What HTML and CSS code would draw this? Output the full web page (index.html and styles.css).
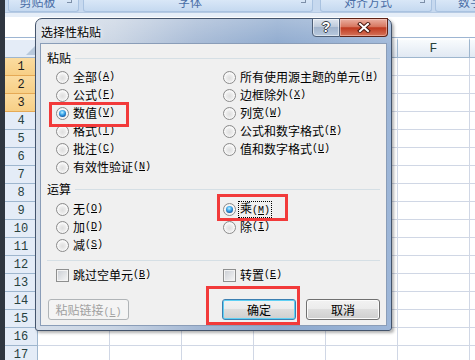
FILE: index.html
```html
<!DOCTYPE html>
<html lang="zh-CN">
<head>
    <meta charset="UTF-8">
    <meta name="viewport" content="width=device-width, initial-scale=1.0">
    <title>选择性粘贴</title>
    <link rel="stylesheet" href="styles.css">
</head>
<body>
<div class="app">
    <div class="ribbon">
        <div class="group g-clip"><span>剪贴板</span><i class="launch"></i></div>
        <div class="group g-font"><span>字体</span><i class="launch"></i></div>
        <div class="group g-align"><span>对齐方式</span><i class="launch"></i></div>
        <div class="group g-num"><span>数字</span></div>
    </div>
    <div class="formula-bar"></div>

    <div class="sheet">
        <div class="row head">
            <div class="corner"></div>
            <div class="col">A</div>
            <div class="col">B</div>
            <div class="col">C</div>
            <div class="col">D</div>
            <div class="col">E</div>
            <div class="col">F</div>
            <div class="col">G</div>
        </div>
        <div class="row sel"><div class="rh">1</div><div class="cells"></div></div>
        <div class="row sel"><div class="rh">2</div><div class="cells"></div></div>
        <div class="row sel"><div class="rh">3</div><div class="cells"></div></div>
        <div class="row"><div class="rh">4</div><div class="cells"></div></div>
        <div class="row"><div class="rh">5</div><div class="cells"></div></div>
        <div class="row"><div class="rh">6</div><div class="cells"></div></div>
        <div class="row"><div class="rh">7</div><div class="cells"></div></div>
        <div class="row"><div class="rh">8</div><div class="cells"></div></div>
        <div class="row"><div class="rh">9</div><div class="cells"></div></div>
        <div class="row"><div class="rh">10</div><div class="cells"></div></div>
        <div class="row"><div class="rh">11</div><div class="cells"></div></div>
        <div class="row"><div class="rh">12</div><div class="cells"></div></div>
        <div class="row"><div class="rh">13</div><div class="cells"></div></div>
        <div class="row"><div class="rh">14</div><div class="cells"></div></div>
        <div class="row"><div class="rh">15</div><div class="cells"></div></div>
        <div class="row"><div class="rh">16</div><div class="cells"></div></div>
        <div class="row"><div class="rh">17</div><div class="cells"></div></div>
    </div>

    <!-- Paste Special dialog -->
    <div class="dialog">
        <div class="titlebar">
            <span class="title">选择性粘贴</span>
            <div class="caption">
                <button class="cap help">?</button>
                <button class="cap close">
                    <svg width="14" height="11" viewBox="0 0 14 11">
                        <path d="M3 2 L11 9 M11 2 L3 9" stroke="#4a1810" stroke-width="4" stroke-linecap="square" fill="none"/>
                        <path d="M3 2 L11 9 M11 2 L3 9" stroke="#fff" stroke-width="2" stroke-linecap="square" fill="none"/>
                    </svg>
                </button>
            </div>
        </div>

        <div class="client">
            <div class="legend"><span>粘贴</span></div>
            <div class="opts paste">
                <label class="opt"><i class="radio"></i>全部<span class="key">(<u>A</u>)</span></label>
                <label class="opt"><i class="radio"></i>公式<span class="key">(<u>F</u>)</span></label>
                <label class="opt"><i class="radio on"></i>数值<span class="key">(<u>V</u>)</span></label>
                <label class="opt"><i class="radio"></i>格式<span class="key">(<u>T</u>)</span></label>
                <label class="opt"><i class="radio"></i>批注<span class="key">(<u>C</u>)</span></label>
                <label class="opt"><i class="radio"></i>有效性验证<span class="key">(<u>N</u>)</span></label>
                <label class="opt"><i class="radio"></i>所有使用源主题的单元<span class="key">(<u>H</u>)</span></label>
                <label class="opt"><i class="radio"></i>边框除外<span class="key">(<u>X</u>)</span></label>
                <label class="opt"><i class="radio"></i>列宽<span class="key">(<u>W</u>)</span></label>
                <label class="opt"><i class="radio"></i>公式和数字格式<span class="key">(<u>R</u>)</span></label>
                <label class="opt"><i class="radio"></i>值和数字格式<span class="key">(<u>U</u>)</span></label>
            </div>

            <div class="legend op"><span>运算</span></div>
            <div class="opts ops">
                <label class="opt"><i class="radio"></i>无<span class="key">(<u>O</u>)</span></label>
                <label class="opt"><i class="radio"></i>加<span class="key">(<u>D</u>)</span></label>
                <label class="opt"><i class="radio"></i>减<span class="key">(<u>S</u>)</span></label>
                <label class="opt"><i class="radio on"></i><span class="focus">乘<span class="key">(<u>M</u>)</span></span></label>
                <label class="opt"><i class="radio"></i>除<span class="key">(<u>I</u>)</span></label>
            </div>

            <div class="sep"></div>
            <div class="opts checks">
                <label class="opt"><i class="check"></i>跳过空单元<span class="key">(<u>B</u>)</span></label>
                <label class="opt"><i class="check"></i>转置<span class="key">(<u>E</u>)</span></label>
            </div>

            <div class="buttons">
                <button class="btn link" disabled>粘贴链接<span class="key">(<u>L</u>)</span></button>
                <button class="btn ok">确定</button>
                <button class="btn cancel">取消</button>
            </div>

            <!-- red annotation boxes -->
            <div class="mark m-value"></div>
            <div class="mark m-mul"></div>
            <div class="mark m-ok"></div>
        </div>
    </div>
</div>
</body>
</html>
```

FILE: styles.css
```css
body {
    margin: 0;
    font-family: "Noto Sans CJK SC", "Noto Sans", sans-serif;
    font-size: 12px;
    background-color: #ffffff;
    overflow: hidden;
}
.app {
    position: relative;
    width: 475px;
    height: 360px;
    overflow: hidden;
    box-sizing: border-box;
    border-left: 5px solid #2f3640;
    background-color: #ffffff;
}

/* ribbon leftovers at the top */
.ribbon {
    display: flex;
    height: 12px;
    background-color: #c7d9ef;
}
.group {
    position: relative;
    height: 12px;
    box-sizing: border-box;
    border: 1px solid #a9c2e0;
    border-top: none;
    border-radius: 0 0 3px 3px;
    background: linear-gradient(#d9e7f7, #c5d9f0);
    display: flex;
    justify-content: center;
    align-items: flex-end;
    overflow: hidden;
    color: #4a6ea6;
    flex: none;
}
.group span {
    line-height: 12px;
    margin-bottom: 3px;
    white-space: nowrap;
}
.launch {
    position: absolute;
    right: 6px;
    top: 0;
    width: 4px;
    height: 2px;
    border-right: 1px solid #7d8fa8;
    border-bottom: 1px solid #7d8fa8;
}
.g-clip { margin-left: 3px; width: 71px; padding-right: 12px; }
.g-font { margin-left: 4px; width: 230px; padding-right: 16px; }
.g-align { margin-left: 7px; width: 112px; padding-right: 16px; }
.g-num { margin-left: 3px; width: 60px; justify-content: flex-start; padding-left: 22px; }

.formula-bar {
    height: 26px;
    box-sizing: border-box;
    border-top: 1px solid #b6cae3;
    border-bottom: 1px solid #9db5d2;
    background: linear-gradient(#e6eef8 0, #e6eef8 4px, #ffffff 4px);
}

/* sheet */
.row {
    display: flex;
    height: 18px;
}
.row.head {
    height: 20px;
}
.rh, .corner {
    width: 33px;
    flex: none;
    box-sizing: border-box;
    border-right: 1px solid #9eb6ce;
    border-bottom: 1px solid #9eb6ce;
    background-color: #e4ecf7;
}
.rh {
    text-align: center;
    font: 12px/18px "Liberation Mono", monospace;
    color: #27413e;
}
.row.sel .rh {
    background: linear-gradient(#fbdca0, #f7cf86);
    border-bottom-color: #e5a955;
    border-right-color: #e5a955;
    color: #1d1d1d;
}
.corner {
    position: relative;
    border-top: 2px solid #ffffff;
}
.corner::after {
    content: "";
    position: absolute;
    right: 2px;
    bottom: 2px;
    border-left: 9px solid transparent;
    border-bottom: 9px solid #b8c9dc;
}
.col {
    width: 72px;
    flex: none;
    box-sizing: border-box;
    border-top: 2px solid #ffffff;
    border-right: 1px solid #9eb6ce;
    border-bottom: 1px solid #9eb6ce;
    background: linear-gradient(#f8fbfd, #e1e9f3);
    text-align: center;
    font: 13px/17px "Liberation Mono", monospace;
    color: #27413e;
}
.cells {
    flex: 1;
    box-sizing: border-box;
    border-bottom: 1px solid #d0d7e5;
    background: repeating-linear-gradient(90deg, #ffffff 0, #ffffff 71px, #d0d7e5 71px, #d0d7e5 72px);
}

/* dialog window */
.dialog {
    position: absolute;
    left: 30px;
    top: 18px;
    width: 357px;
    height: 313px;
    box-sizing: border-box;
    border: 1px solid #44546c;
    border-radius: 7px 7px 3px 3px;
    padding: 0 4px 4px;
    display: flex;
    flex-direction: column;
    background:
        linear-gradient(rgba(255, 255, 255, 0.25), rgba(255, 255, 255, 0) 30px),
        linear-gradient(90deg, #d6dee9 0%, #c9d4e3 22%, #a5b9d5 45%, #8ca8cd 68%, #9db6d8 100%);
    box-shadow: 2px 2px 3px rgba(0, 0, 0, 0.3);
}
.titlebar {
    height: 24px;
    display: flex;
    align-items: center;
}
.title {
    padding-left: 1px;
    margin-top: 1px;
    color: #000000;
    text-shadow: 0 0 4px #ffffff, 0 0 8px rgba(255, 255, 255, 0.8);
}
.caption {
    margin-left: auto;
    margin-top: -1px;
    margin-right: -1px;
    align-self: flex-start;
    display: flex;
}
.cap {
    height: 19px;
    padding: 0;
    display: flex;
    align-items: center;
    justify-content: center;
    box-sizing: border-box;
}
.help {
    width: 28px;
    border: 1px solid #4e5f77;
    border-radius: 0 0 0 4px;
    background: linear-gradient(#dfe6ef, #bfcbdb 45%, #a2b4cc 50%, #b8c9de);
    box-shadow: inset 0 0 0 1px rgba(255, 255, 255, 0.5);
    font: bold 14px/17px "Liberation Sans", sans-serif;
    color: #ffffff;
    text-shadow: 1px 0 #3a3f46, -1px 0 #3a3f46, 0 1px #3a3f46, 0 -1px #3a3f46;
}
.close {
    width: 48px;
    border: 1px solid #5e2216;
    border-left: none;
    border-radius: 0 0 4px 0;
    background: linear-gradient(#eab0a2, #d77760 45%, #bf3a20 52%, #d5735a);
    box-shadow: inset 0 0 0 1px rgba(255, 220, 210, 0.45);
}

.client {
    flex: 1;
    position: relative;
    background-color: #f0f0f0;
    border: 1px solid #8a9db8;
    padding: 0 6px;
    display: flex;
    flex-direction: column;
    color: #000000;
}
.legend {
    margin-top: 7px;
    height: 14px;
    display: flex;
    align-items: center;
}
.legend span {
    line-height: 14px;
    margin-right: 4px;
}
.legend::after {
    content: "";
    flex: 1;
    border-top: 1px solid #d5dfe5;
}
.legend.op {
    margin-top: 6px;
}
.opts {
    display: grid;
    grid-template-columns: 167px 1fr;
    grid-auto-flow: column;
    grid-template-rows: repeat(6, 18px);
    padding-left: 9px;
}
.paste { margin-top: 3px; }
.ops {
    margin-top: 4px;
    grid-template-rows: repeat(3, 18px);
}
.checks {
    margin-top: 5px;
    grid-template-rows: 18px;
}
.opt {
    display: flex;
    align-items: center;
    white-space: nowrap;
    line-height: 18px;
}
.key {
    font-family: "Liberation Mono", monospace;
    font-size: 10px;
}
.radio {
    width: 13px;
    height: 13px;
    flex: none;
    box-sizing: border-box;
    margin-right: 4px;
    border-radius: 50%;
    border: 1px solid #8b8b8b;
    background: radial-gradient(circle at 50% 55%, #dedede 0, #ececec 40%, #fafafa 62%, #d0d0d0 100%);
    display: flex;
    align-items: center;
    justify-content: center;
}
.radio.on::after {
    content: "";
    width: 7px;
    height: 7px;
    border-radius: 50%;
    background: radial-gradient(circle at 45% 35%, #c4f0ff 0, #49b2f0 35%, #1262b0 72%, #0b3d74 100%);
}
.check {
    width: 13px;
    height: 13px;
    flex: none;
    box-sizing: border-box;
    margin-right: 4px;
    border: 1px solid #8e8f8f;
    background: linear-gradient(135deg, #c9cdd3, #f7f7f7);
    box-shadow: inset 0 0 0 1px #f3f3f3;
}
.focus {
    margin-left: -2px;
    padding: 0 1px;
    border: 1px dotted #000000;
    line-height: 12px;
}
.sep {
    margin-top: 6px;
    border-top: 1px solid #d5dfe5;
}
.buttons {
    margin-top: 15px;
    display: flex;
}
.btn {
    height: 21px;
    width: 74px;
    padding: 0;
    box-sizing: border-box;
    border: 1px solid #707070;
    border-radius: 3px;
    background: linear-gradient(#f2f2f2 0, #ebebeb 50%, #dddddd 50%, #cfcfcf 100%);
    box-shadow: inset 0 0 0 1px #fbfbfb;
    font-family: inherit;
    font-size: 12px;
    color: #000000;
}
.btn.link {
    width: 81px;
    margin-left: 1px;
    margin-right: auto;
}
.btn:disabled {
    border-color: #b0b4b7;
    background: #f4f4f4;
    box-shadow: none;
    color: #a0a0a0;
}
.btn.ok {
    border-color: #3c7fb1;
    box-shadow: inset 0 0 0 1px #5fd0f4;
}
.btn.cancel {
    margin-left: 10px;
}

.mark {
    position: absolute;
    box-sizing: border-box;
    border: 3px solid #f23a3a;
}
.m-value { left: 8px; top: 58px; width: 80px; height: 25px; }
.m-mul { left: 176px; top: 150px; width: 71px; height: 27px; }
.m-ok { left: 165px; top: 242px; width: 94px; height: 39px; }
```
